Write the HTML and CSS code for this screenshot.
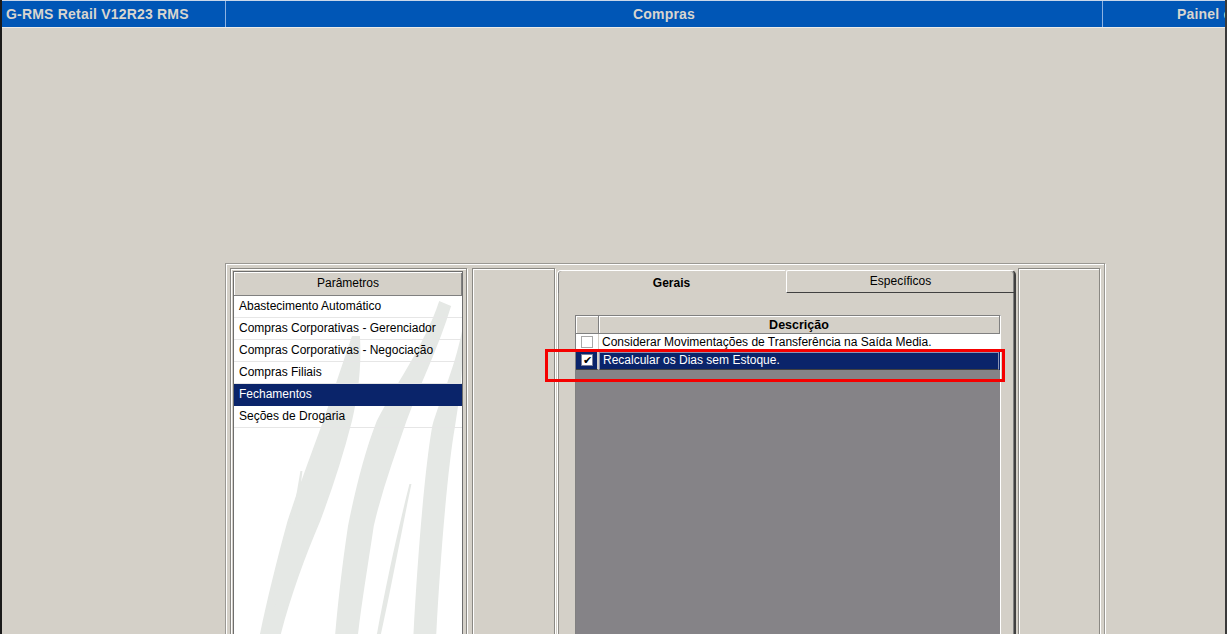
FILE: index.html
```html
<!DOCTYPE html>
<html lang="pt-BR">
<head>
  <meta charset="UTF-8" />
  <title>G-RMS Retail - Compras</title>
  <link rel="stylesheet" href="styles.css">
</head>
<body>
  <div class="titlebar">
    <div class="tb-cell tb-app">G-RMS Retail V12R23 RMS</div>
    <div class="tb-cell tb-module">Compras</div>
    <div class="tb-cell tb-panel">Painel de Controle</div>
  </div>

  <div class="workspace">
    <div class="frame">
      <div class="etched list-panel">
        <div class="list">
          <svg class="watermark" viewBox="233 271 230 363" preserveAspectRatio="none">
            <path d="M352 335 C340 370 330 400 323 420 C310 455 297 490 287 520 C276 560 266 600 259 634 L280 634 C290 595 305 555 320 520 C332 488 343 455 352 420 C358 395 362 365 360 335 Z" />
            <path d="M300 470 C292 520 280 570 268 610 L272 612 C286 570 297 520 302 470 Z" />
            <path d="M440 300 C425 345 395 385 377 420 C365 450 355 490 348 525 C342 565 338 600 335 634 L358 634 C362 600 368 565 374 525 C382 490 395 455 407 420 C420 385 440 345 452 305 Z" />
            <path d="M410 483 C398 530 386 585 377 634 L381 634 C392 585 402 530 412 483 Z" />
            <path d="M463 330 C455 370 440 400 433 425 C425 470 418 560 414 634 L437 634 C441 560 448 470 456 425 C460 400 463 380 463 360 Z" />
          </svg>
          <div class="list-head">Parâmetros</div>
          <div class="list-row">Abastecimento Automático</div>
          <div class="list-row">Compras Corporativas - Gerenciador</div>
          <div class="list-row">Compras Corporativas - Negociação</div>
          <div class="list-row">Compras Filiais</div>
          <div class="list-row selected">Fechamentos</div>
          <div class="list-row">Seções de Drogaria</div>
        </div>
      </div>

      <div class="etched mid-panel"></div>

      <div class="tabs">
        <div class="tab-row">
          <div class="tab active">Gerais</div>
          <div class="tab">Específicos</div>
        </div>
        <div class="tab-body">
          <div class="grid">
            <div class="grid-head">
              <div class="gh-check"></div>
              <div class="gh-desc">Descrição</div>
            </div>
            <div class="grid-row">
              <div class="g-check"><span class="checkbox"></span></div>
              <div class="g-desc">Considerar Movimentações de Transferência na Saída Media.</div>
            </div>
            <div class="grid-row selected">
              <div class="g-check"><span class="checkbox checked">&#10004;</span></div>
              <div class="g-desc">Recalcular os Dias sem Estoque.</div>
            </div>
            <div class="grid-empty"></div>
          </div>
        </div>
      </div>

      <div class="etched right-panel"></div>
    </div>
  </div>

  <div class="highlight"></div>
</body>
</html>
```

FILE: styles.css
```css
body {
  margin: 0;
  height: 634px;
  overflow: hidden;
  background-color: #d4d0c8;
  font-family: "Liberation Sans", Arial, sans-serif;
  font-size: 12px;
  color: #000;
  border-left: 2px solid #1a1a1a;
  border-right: 2px solid #3a3a3a;
  box-sizing: border-box;
}

/* top bar */
.titlebar {
  display: flex;
  height: 26px;
  background-color: #0056b6;
  border-top: 1px solid #c9d7ea;
  border-bottom: 1px solid #ecebe8;
  color: #d8d5cf;
  font-size: 14px;
  font-weight: bold;
  letter-spacing: 0.2px;
}
.tb-cell {
  line-height: 26px;
  white-space: nowrap;
  overflow: hidden;
}
.tb-app {
  width: 219px;
  padding-left: 4px;
  border-right: 1px solid #8db2e2;
}
.tb-module {
  width: 876px;
  text-align: center;
  border-right: 1px solid #8db2e2;
}
.tb-panel {
  flex: 1;
  padding-left: 74px;
}

/* main frame */
.workspace {
  padding-top: 235px;
  padding-left: 223px;
}
.frame {
  display: flex;
  gap: 4px;
  width: 880px;
  height: 390px;
  box-sizing: border-box;
  padding: 4px 4px 0 4px;
  border: 1px solid #9a9893;
  box-shadow: inset 1px 1px 0 #fff, 1px 1px 0 #fff;
}
.etched {
  box-sizing: border-box;
  border: 1px solid #8a8883;
  box-shadow: inset 1px 1px 0 #fff, 1px 1px 0 #fff;
}

/* left list */
.list-panel {
  width: 237px;
  padding: 2px 3px 0 2px;
}
.list {
  position: relative;
  height: 100%;
  background-color: #fff;
  border: 1px solid #6e6e6e;
  box-sizing: border-box;
  overflow: hidden;
}
.watermark {
  position: absolute;
  left: 0;
  top: 0;
  width: 228px;
  height: 363px;
  fill: #e5e8e5;
}
.list-head {
  position: relative;
  height: 23px;
  line-height: 23px;
  text-align: center;
  background-color: #d4d0c8;
  border-bottom: 1px solid #808080;
  box-shadow: inset 1px 1px 0 #fff, inset -1px 0 0 #808080;
}
.list-row {
  position: relative;
  height: 21px;
  line-height: 21px;
  padding-left: 5px;
  border-bottom: 1px solid #e6e6e6;
  white-space: nowrap;
}
.list-row.selected {
  background-color: #0a246a;
  color: #fff;
  border-bottom-color: #0a246a;
}

.mid-panel {
  width: 83px;
  margin-left: 1px;
}
.right-panel {
  width: 82px;
  margin-left: -2px;
}

/* tabs */
.tabs {
  display: flex;
  flex-direction: column;
  width: 459px;
  margin-left: -2px;
  padding-top: 2px;
}
.tab-row {
  display: flex;
  height: 23px;
  align-items: flex-end;
}
.tab {
  flex: 1;
  height: 23px;
  line-height: 21px;
  text-align: center;
  box-sizing: border-box;
  border-top: 1px solid #fff;
  border-left: 1px solid #fff;
  border-right: 2px solid #404040;
  border-bottom: 1px solid #404040;
  border-top-right-radius: 5px;
  border-top-left-radius: 2px;
  box-shadow: inset -1px 0 0 #808080;
}
.tab.active {
  line-height: 24px;
  font-weight: bold;
  border-right: 1px solid #d4d0c8;
  border-bottom: none;
  box-shadow: inset 1px 0 0 #808080;
  border-top-left-radius: 4px;
  border-top-right-radius: 0;
}
.tab-body {
  flex: 1;
  box-sizing: border-box;
  border-left: 1px solid #fff;
  border-right: 2px solid #404040;
  box-shadow: inset 1px 0 0 #8f8d88, inset -1px 0 0 #808080;
  padding: 22px 13px 0 17px;
  display: flex;
  flex-direction: column;
}

/* grid */
.grid {
  flex: 1;
  display: flex;
  flex-direction: column;
  border-top: 1px solid #808080;
  border-left: 1px solid #808080;
  border-right: 1px solid #fff;
  background-color: #858387;
}
.grid-head {
  display: flex;
  height: 18px;
  background-color: #d4d0c8;
  font-weight: bold;
}
.gh-check, .gh-desc {
  box-sizing: border-box;
  border-right: 1px solid #808080;
  border-bottom: 1px solid #808080;
  box-shadow: inset 1px 1px 0 #fff;
}
.gh-check {
  width: 23px;
}
.gh-desc {
  flex: 1;
  text-align: center;
  line-height: 18px;
  font-size: 12.5px;
}
.grid-row {
  display: flex;
  height: 18px;
  background-color: #fff;
}
.g-check {
  width: 23px;
  box-sizing: border-box;
  border-right: 1px solid #d4d0c8;
  border-bottom: 1px solid #d4d0c8;
  padding: 2px 0 0 5px;
}
.g-desc {
  flex: 1;
  line-height: 17px;
  padding-left: 3px;
  white-space: nowrap;
  overflow: hidden;
  border-bottom: 1px solid #d4d0c8;
}
.checkbox {
  display: block;
  width: 12px;
  height: 12px;
  box-sizing: border-box;
  border: 1px solid #a8a8a8;
  background-color: #fff;
  font-size: 11px;
  line-height: 11px;
  text-align: center;
  color: #000;
}
.grid-row.selected {
  background-color: #0a246a;
  color: #fff;
}
.grid-row.selected .g-check {
  border-right: 2px solid #d4d0c8;
  border-bottom-color: #404040;
}
.grid-row.selected .g-desc {
  border: 1px solid #8a93b4;
  border-bottom-color: #404040;
  line-height: 15px;
  margin-right: 1px;
}
.checkbox.checked {
  border-color: #7a7f99;
}
.grid-empty {
  flex: 1;
}

/* annotation */
.highlight {
  position: absolute;
  left: 545px;
  top: 349px;
  width: 460px;
  height: 33px;
  box-sizing: border-box;
  border: 3px solid #f50000;
}
```
